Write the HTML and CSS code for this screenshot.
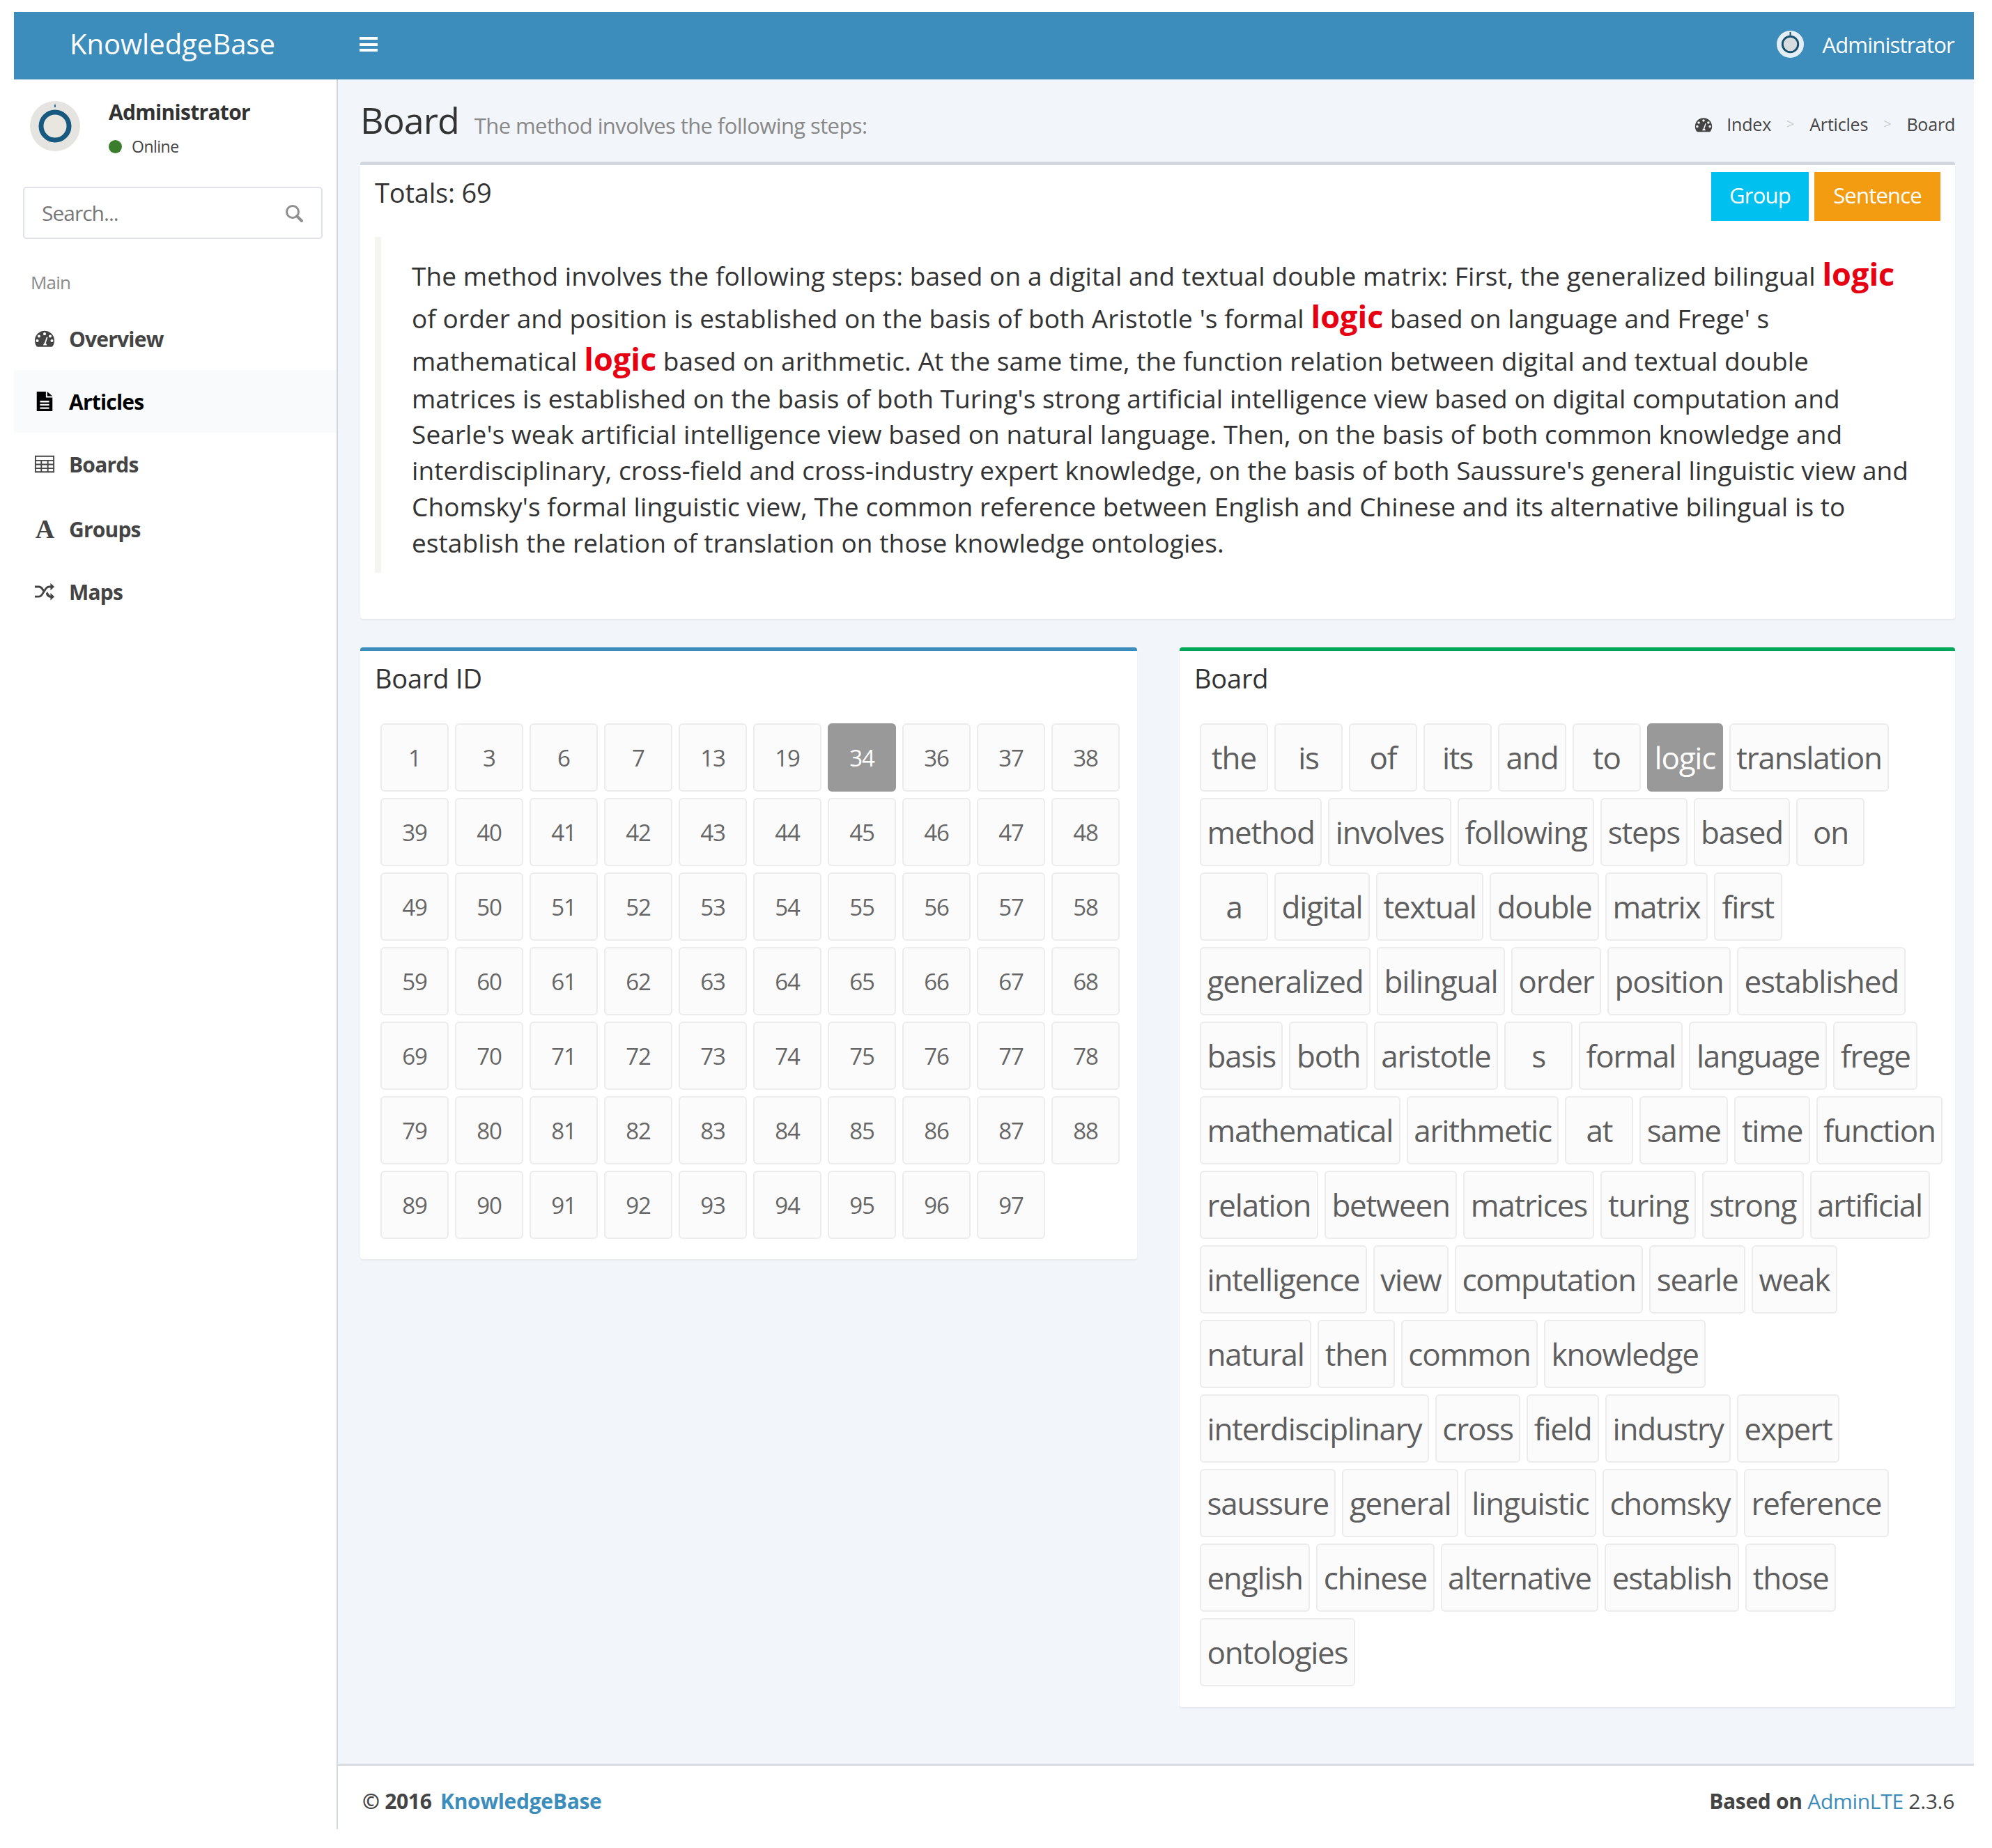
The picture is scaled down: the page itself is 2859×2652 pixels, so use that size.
FILE: index.html
```html
<!DOCTYPE html>
<html lang="en">
<head>
<meta charset="utf-8">
<title>KnowledgeBase</title>
<link rel="stylesheet" href="styles.css">
</head>
<body>
<div class="app">
  <header class="topbar">
    <div class="logo">KnowledgeBase</div>
    <div class="burger"><i></i><i></i><i></i></div>
    <div class="top-user">
      <svg class="top-avatar" viewBox="0 0 40 40"><circle cx="20" cy="20" r="20" fill="#e3eef6"/><circle cx="20" cy="20" r="11.5" fill="#d9dcdf" stroke="#17506f" stroke-width="3"/><rect x="19" y="2" width="2" height="5" fill="#17506f"/></svg>
      <span>Administrator</span>
    </div>
  </header>
  <div class="body-row">
    <aside class="sidebar">
      <div class="user-panel">
        <svg class="avatar" viewBox="0 0 72 72"><circle cx="36" cy="36" r="36" fill="#e6e4e0"/><circle cx="36" cy="36" r="20" fill="#e9e6df" stroke="#17597f" stroke-width="7"/><rect x="35" y="5" width="2" height="4" fill="#2a6f95"/></svg>
        <div class="user-info">
          <div class="user-name">Administrator</div>
          <div class="user-status"><i class="dot"></i>Online</div>
        </div>
      </div>
      <div class="search">
        <span>Search...</span>
        <svg class="search-icon" viewBox="0 0 28 28"><circle cx="12" cy="12" r="8.5" fill="none" stroke="#8f8f8f" stroke-width="3"/><path d="M18 18l7 7" stroke="#8f8f8f" stroke-width="4" stroke-linecap="round"/></svg>
      </div>
      <div class="menu-title">Main</div>
      <ul class="menu">
        <li class="menu-item">
          <svg class="menu-icon" viewBox="0 0 32 28"><path fill="#444" fill-rule="evenodd" d="M16 2C7.700 2 1 8.700 1 17c0 3.300 1 6.300 2.800 8.800.4.500 1 .7 1.600.7h21.200c.6 0 1.200-.2 1.600-.7C29.900 23.300 31 20.300 31 17 31 8.700 24.300 2 16 2zM16 4.500a2.200 2.200 0 1 1 0 4.400 2.200 2.200 0 0 1 0-4.400zM7.500 8a2.200 2.200 0 1 1 0 4.400A2.200 2.200 0 0 1 7.500 8zM24.500 8a2.200 2.200 0 1 1 0 4.400 2.200 2.200 0 0 1 0-4.400zM4.800 15a2.200 2.200 0 1 1 0 4.400 2.200 2.200 0 0 1 0-4.400zM27.200 15a2.200 2.200 0 1 1 0 4.400 2.200 2.200 0 0 1 0-4.400zM14 24c0-1.500.6-2.700 1.700-3.200L19 11.500l1.700.6-3 9.100c1 .6 1.700 1.600 1.700 2.800H14z"/></svg>
          <span>Overview</span>
        </li>
        <li class="menu-item active">
          <svg class="menu-icon" viewBox="0 0 32 32"><path fill="#000" fill-rule="evenodd" d="M4 1h14v9h10v21H4zM20 1l8 7h-8zM9 15v2.500h14V15zM9 20v2.500h14V20zM9 25v2.500h14V25z"/></svg>
          <span>Articles</span>
        </li>
        <li class="menu-item">
          <svg class="menu-icon" viewBox="0 0 32 28"><path fill="none" stroke="#444" stroke-width="2" d="M2 2h28v24H2zM2 8.500h28M2 14.500h28M2 20.500h28M11 8.500V26M21 8.500V26"/></svg>
          <span>Boards</span>
        </li>
        <li class="menu-item tall">
          <span class="font-icon">A</span>
          <span>Groups</span>
        </li>
        <li class="menu-item">
          <svg class="menu-icon" viewBox="0 0 32 28"><path fill="#444" d="M1 5h6c3 0 5 1.500 6.500 3.500L16 12l-2 3-3-4.500C10 9 9 8 7 8H1zM1 20h6c2 0 3-1 4-2.500l5.500-8.500C18 6.700 20.500 5 23 5h2V1l6 5.500-6 5.500V8h-2c-1.800 0-3 1-4 2.500L13.500 19C12 21.500 10 23 7 23H1zM18 17l2-3 2 3c.8 1.300 1.800 3 3 3v-3.800l6 5.500-6 5.500v-4c-3.200 0-5-2-6.300-4z"/></svg>
          <span>Maps</span>
        </li>
      </ul>
    </aside>
    <div class="main-col">
      <main class="content">
        <div class="content-head">
          <h1 class="page-title">Board<small>The method involves the following steps:</small></h1>
          <ol class="crumbs">
            <li>
              <svg class="crumb-icon" viewBox="0 0 32 28"><path fill="#444" fill-rule="evenodd" d="M16 2C7.700 2 1 8.700 1 17c0 3.300 1 6.300 2.800 8.800.4.500 1 .7 1.600.7h21.200c.6 0 1.200-.2 1.600-.7C29.900 23.300 31 20.300 31 17 31 8.700 24.300 2 16 2zM16 4.500a2.200 2.200 0 1 1 0 4.400 2.200 2.200 0 0 1 0-4.400zM7.500 8a2.200 2.200 0 1 1 0 4.400A2.200 2.200 0 0 1 7.500 8zM24.500 8a2.200 2.200 0 1 1 0 4.400 2.200 2.200 0 0 1 0-4.400zM4.800 15a2.200 2.200 0 1 1 0 4.400 2.200 2.200 0 0 1 0-4.400zM27.200 15a2.200 2.200 0 1 1 0 4.400 2.200 2.200 0 0 1 0-4.400zM14 24c0-1.500.6-2.700 1.700-3.200L19 11.500l1.700.6-3 9.100c1 .6 1.700 1.600 1.700 2.800H14z"/></svg>
              Index</li>
            <li class="sep">&gt;</li>
            <li>Articles</li>
            <li class="sep">&gt;</li>
            <li>Board</li>
          </ol>
        </div>
        <section class="box box-summary">
          <div class="summary-head">
            <div class="totals">Totals: 69</div>
            <div class="btns">
              <div class="btn btn-info">Group</div>
              <div class="btn btn-warning">Sentence</div>
            </div>
          </div>
          <blockquote class="quote">The method involves the following steps: based on a digital and textual double matrix: First, the generalized bilingual <b>logic</b> of order and position is established on the basis of both Aristotle 's formal <b>logic</b> based on language and Frege' s mathematical <b>logic</b> based on arithmetic. At the same time, the function relation between digital and textual double matrices is established on the basis of both Turing's strong artificial intelligence view based on digital computation and Searle's weak artificial intelligence view based on natural language. Then, on the basis of both common knowledge and interdisciplinary, cross-field and cross-industry expert knowledge, on the basis of both Saussure's general linguistic view and Chomsky's formal linguistic view, The common reference between English and Chinese and its alternative bilingual is to establish the relation of translation on those knowledge ontologies.</blockquote>
        </section>
        <div class="columns">
          <section class="box box-primary box-ids">
            <h3 class="box-title">Board ID</h3>
            <div class="chips num-chips">
              <a class="chip">1</a><a class="chip">3</a><a class="chip">6</a><a class="chip">7</a><a class="chip">13</a><a class="chip">19</a><a class="chip on">34</a><a class="chip">36</a><a class="chip">37</a><a class="chip">38</a>
              <a class="chip">39</a><a class="chip">40</a><a class="chip">41</a><a class="chip">42</a><a class="chip">43</a><a class="chip">44</a><a class="chip">45</a><a class="chip">46</a><a class="chip">47</a><a class="chip">48</a>
              <a class="chip">49</a><a class="chip">50</a><a class="chip">51</a><a class="chip">52</a><a class="chip">53</a><a class="chip">54</a><a class="chip">55</a><a class="chip">56</a><a class="chip">57</a><a class="chip">58</a>
              <a class="chip">59</a><a class="chip">60</a><a class="chip">61</a><a class="chip">62</a><a class="chip">63</a><a class="chip">64</a><a class="chip">65</a><a class="chip">66</a><a class="chip">67</a><a class="chip">68</a>
              <a class="chip">69</a><a class="chip">70</a><a class="chip">71</a><a class="chip">72</a><a class="chip">73</a><a class="chip">74</a><a class="chip">75</a><a class="chip">76</a><a class="chip">77</a><a class="chip">78</a>
              <a class="chip">79</a><a class="chip">80</a><a class="chip">81</a><a class="chip">82</a><a class="chip">83</a><a class="chip">84</a><a class="chip">85</a><a class="chip">86</a><a class="chip">87</a><a class="chip">88</a>
              <a class="chip">89</a><a class="chip">90</a><a class="chip">91</a><a class="chip">92</a><a class="chip">93</a><a class="chip">94</a><a class="chip">95</a><a class="chip">96</a><a class="chip">97</a>
            </div>
          </section>
          <section class="box box-success box-words">
            <h3 class="box-title">Board</h3>
            <div class="chips word-chips">
              <div class="chip-row"><a class="chip">the</a><a class="chip">is</a><a class="chip">of</a><a class="chip">its</a><a class="chip">and</a><a class="chip">to</a><a class="chip on">logic</a><a class="chip">translation</a></div>
              <div class="chip-row"><a class="chip">method</a><a class="chip">involves</a><a class="chip">following</a><a class="chip">steps</a><a class="chip">based</a><a class="chip">on</a></div>
              <div class="chip-row"><a class="chip">a</a><a class="chip">digital</a><a class="chip">textual</a><a class="chip">double</a><a class="chip">matrix</a><a class="chip">first</a></div>
              <div class="chip-row"><a class="chip">generalized</a><a class="chip">bilingual</a><a class="chip">order</a><a class="chip">position</a><a class="chip">established</a></div>
              <div class="chip-row"><a class="chip">basis</a><a class="chip">both</a><a class="chip">aristotle</a><a class="chip">s</a><a class="chip">formal</a><a class="chip">language</a><a class="chip">frege</a></div>
              <div class="chip-row"><a class="chip">mathematical</a><a class="chip">arithmetic</a><a class="chip">at</a><a class="chip">same</a><a class="chip">time</a><a class="chip">function</a></div>
              <div class="chip-row"><a class="chip">relation</a><a class="chip">between</a><a class="chip">matrices</a><a class="chip">turing</a><a class="chip">strong</a><a class="chip">artificial</a></div>
              <div class="chip-row"><a class="chip">intelligence</a><a class="chip">view</a><a class="chip">computation</a><a class="chip">searle</a><a class="chip">weak</a></div>
              <div class="chip-row"><a class="chip">natural</a><a class="chip">then</a><a class="chip">common</a><a class="chip">knowledge</a></div>
              <div class="chip-row"><a class="chip">interdisciplinary</a><a class="chip">cross</a><a class="chip">field</a><a class="chip">industry</a><a class="chip">expert</a></div>
              <div class="chip-row"><a class="chip">saussure</a><a class="chip">general</a><a class="chip">linguistic</a><a class="chip">chomsky</a><a class="chip">reference</a></div>
              <div class="chip-row"><a class="chip">english</a><a class="chip">chinese</a><a class="chip">alternative</a><a class="chip">establish</a><a class="chip">those</a></div>
              <div class="chip-row"><a class="chip">ontologies</a></div>
            </div>
          </section>
        </div>
      </main>
      <footer class="footer">
        <div><b>© 2016 <a class="link-b">KnowledgeBase</a></b></div>
        <div><b>Based on</b> <a class="link">AdminLTE</a> 2.3.6</div>
      </footer>
    </div>
  </div>
</div>
</body>
</html>
```
FILE: styles.css
```css
* { box-sizing: border-box; }
html, body { margin: 0; padding: 0; background: #fff; }
body {
  padding: 17px 26px 27px 20px;
  font-family: "Open Sans", "Noto Sans", sans-serif;
  color: #333;
}
.app { width: 2813px; height: 2608px; display: flex; flex-direction: column; }
.topbar {
  height: 97px; flex: none; background: #3c8dbc; color: #fff;
  display: flex; align-items: center; padding-bottom: 4px;
}
.logo { width: 496px; padding: 0 0 3px 80px; font-size: 40px; letter-spacing: 0; white-space: nowrap; }
.burger { width: 26px; display: flex; flex-direction: column; gap: 4.5px; }
.burger i { display: block; height: 4px; background: #fff; }
.top-user { margin-left: auto; padding-right: 28px; display: flex; align-items: center; gap: 26px; font-size: 31px; letter-spacing: -.8px; }
.top-avatar { width: 39px; height: 39px; }
.body-row { flex: 1; display: flex; min-height: 0; }

.sidebar { width: 465px; flex: none; background: #fff; border-right: 2px solid #d2d6de; }
.user-panel { display: flex; padding: 31px 0 0 23px; height: 154px; }
.avatar { width: 72px; height: 72px; flex: none; }
.user-info { margin-left: 41px; }
.user-name { font-size: 30px; font-weight: 700; letter-spacing: -.7px; line-height: 32px; }
.user-status { margin-top: 18px; display: flex; align-items: center; font-size: 23px; letter-spacing: -.5px; color: #444; line-height: 30px; }
.dot { width: 19px; height: 19px; border-radius: 50%; background: #3a7d2c; margin-right: 14px; }
.search {
  margin-left: 13px; width: 430px; height: 75px; border: 2px solid #dfe2e8; border-radius: 5px;
  display: flex; align-items: center; justify-content: space-between; padding: 0 25px;
  font-size: 30px; letter-spacing: -1px; color: #777;
}
.search-icon { width: 28px; height: 28px; }
.menu-title { padding: 47px 0 0 24px; font-size: 26px; letter-spacing: -.8px; line-height: 30px; color: #8a8a8a; height: 98px; }
.menu { list-style: none; margin: 0; padding: 0; }
.menu-item {
  height: 90px; display: flex; align-items: center; padding-left: 29px;
  font-size: 30px; font-weight: 700; letter-spacing: -.8px; color: #444;
}
.menu-item.tall { height: 93px; padding-top: 3px; }
.menu-item.active { background: #f9fafc; color: #000; }
.menu-icon { width: 30px; height: 30px; flex: none; margin-right: 20px; }
.font-icon { width: 30px; margin-right: 20px; font-family: "Liberation Serif", serif; font-size: 38px; font-weight: 700; text-align: center; color: #444; }

.main-col { flex: 1; display: flex; flex-direction: column; min-width: 0; }
.content { flex: 1; background: #f2f5f9; padding: 0 27px 0 32px; }
.content-head { height: 118px; display: flex; justify-content: space-between; align-items: flex-start; }
.page-title { margin: 0; padding-top: 28px; font-size: 52px; line-height: 60px; font-weight: 400; letter-spacing: -1px; color: #333; white-space: nowrap; }
.page-title small { margin-left: 22px; font-size: 31px; letter-spacing: -.6px; color: #888; }
.crumbs { list-style: none; margin: 0; padding: 49px 0 0; display: flex; font-size: 25px; letter-spacing: -.2px; color: #444; line-height: 30px; }
.crumbs li { white-space: nowrap; }
.crumbs .sep { color: #ccc; margin: 0 22px; font-size: 20px; }
.crumb-icon { width: 26px; height: 24px; margin-right: 14px; vertical-align: -3px; }

.box { background: #fff; border-top: 5px solid #d2d6de; border-radius: 4px; box-shadow: 0 2px 2px rgba(0,0,0,.05); }
.box-summary { height: 656px; padding: 10px 21px 0; }
.summary-head { display: flex; justify-content: space-between; }
.totals { font-size: 38px; letter-spacing: -.2px; line-height: 50px; padding-top: 4px; }
.btns { display: flex; gap: 8px; }
.btn { height: 70px; line-height: 66px; color: #fff; font-size: 31px; letter-spacing: -.8px; text-align: center; }
.btn-info { width: 140px; background: #00c0ef; }
.btn-warning { width: 181px; background: #f39c12; }
.quote {
  margin: 23px 0 0; height: 482px; border-left: 9px solid #f4f4f0; padding: 22px 38px 0 44px;
  font-size: 37px; line-height: 1.4; letter-spacing: .09px; color: #333;
}
.quote b { color: #e60012; font-size: 45px; letter-spacing: 0; line-height: 1.36; }

.columns { display: flex; justify-content: space-between; align-items: flex-start; margin-top: 41px; }
.box-primary { border-top-color: #3c8dbc; width: 1115px; height: 878px; }
.box-success { border-top-color: #00a65a; width: 1113px; height: 1521px; }
.box-title { margin: 0; padding: 16px 21px 0; font-size: 38px; font-weight: 400; letter-spacing: -.2px; line-height: 46px; }
.chips { display: flex; flex-wrap: wrap; gap: 9px; padding: 0 12px 0 29px; margin-top: 42px; }
.word-chips { flex-direction: column; flex-wrap: nowrap; }
.chip-row { display: flex; gap: 9px; }
.chip {
  height: 98px; min-width: 98px; padding: 0 8.500px; display: flex; align-items: center; justify-content: center;
  background: #fbfbfb; border: 2px solid #ececec; border-radius: 6px; color: #666; white-space: nowrap;
}
.chip.on { background: #999; border-color: #999; color: #fff; }
.num-chips .chip { width: 98px; font-size: 33px; letter-spacing: -1px; }
.word-chips .chip { font-size: 44px; letter-spacing: -1.2px; color: #5e5e5e; }
.word-chips .chip.on { color: #fff; }

.footer {
  height: 94px; flex: none; background: #fff; border-top: 3px solid #d8dbe0; padding: 10px 28px 0 35px;
  display: flex; justify-content: space-between; align-items: center; font-size: 30px; letter-spacing: -.3px; color: #444;
}
.link-b { color: #3c8dbc; margin-left: 5px; }
.link { color: #3c8dbc; }
```
